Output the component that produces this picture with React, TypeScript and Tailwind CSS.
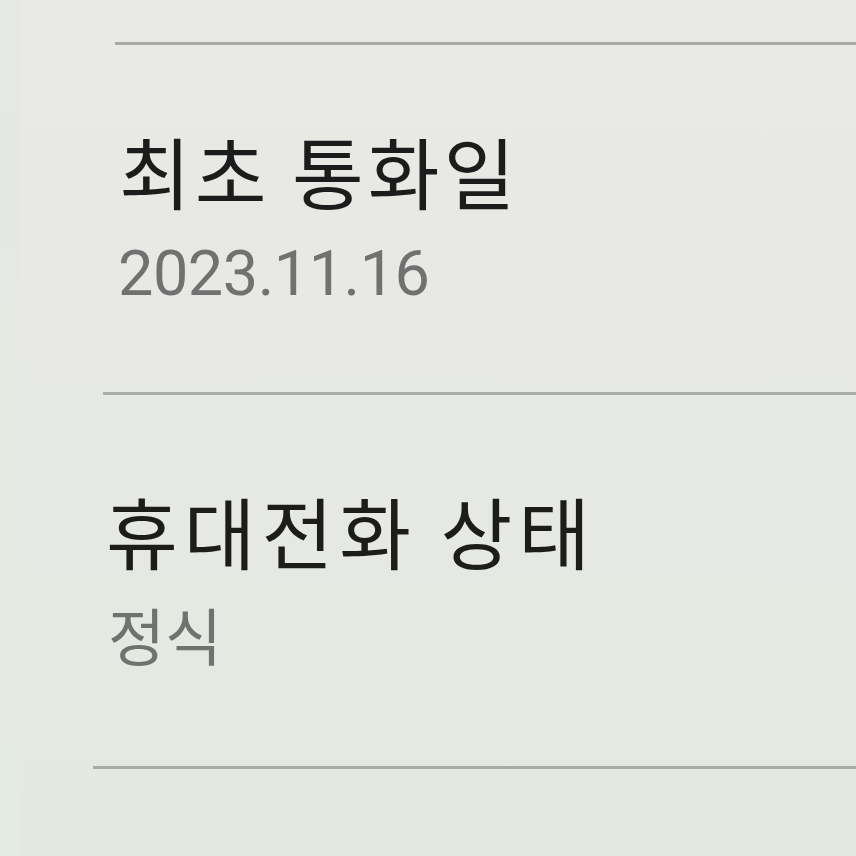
export default function App() {
  return (
    <div className="flex h-[856px] w-[856px] overflow-hidden bg-gradient-to-b from-[#e9e9e6] via-[#e7e9e4] to-[#e3e9e0]" style={{ fontFamily: '"Noto Sans CJK KR", "Noto Sans", sans-serif' }}>
      <div className="w-[20px] shrink-0 bg-gradient-to-b from-[#e6e8e3] to-[#e4ebe2]" />
      <div className="flex flex-1 flex-col">
        <div className="ml-[95px] mt-[42px] h-[3px] bg-[#a9aaa7]" />
        <div className="ml-[99px] mt-[86px] text-[78px] leading-[78px] tracking-[4px] text-[#1c1c1c]">최초 통화일</div>
        <div className="ml-[98px] mt-[33px] text-[63px] leading-[63px] tracking-[-0.5px] text-[#707170]" style={{ fontFamily: 'Roboto, sans-serif' }}>2023.11.16</div>
        <div className="ml-[83px] mt-[87px] h-[3px] bg-[#abada9]" />
        <div className="ml-[86px] mt-[96px] text-[78px] leading-[78px] tracking-[6px] text-[#1c1d1b]">휴대전화 상태</div>
        <div className="ml-[88px] mt-[34px] text-[62px] leading-[62px] text-[#6f726e]">정식</div>
        <div className="ml-[73px] mt-[101px] h-[3px] bg-[#a9aca6]" />
      </div>
    </div>
  );
}
